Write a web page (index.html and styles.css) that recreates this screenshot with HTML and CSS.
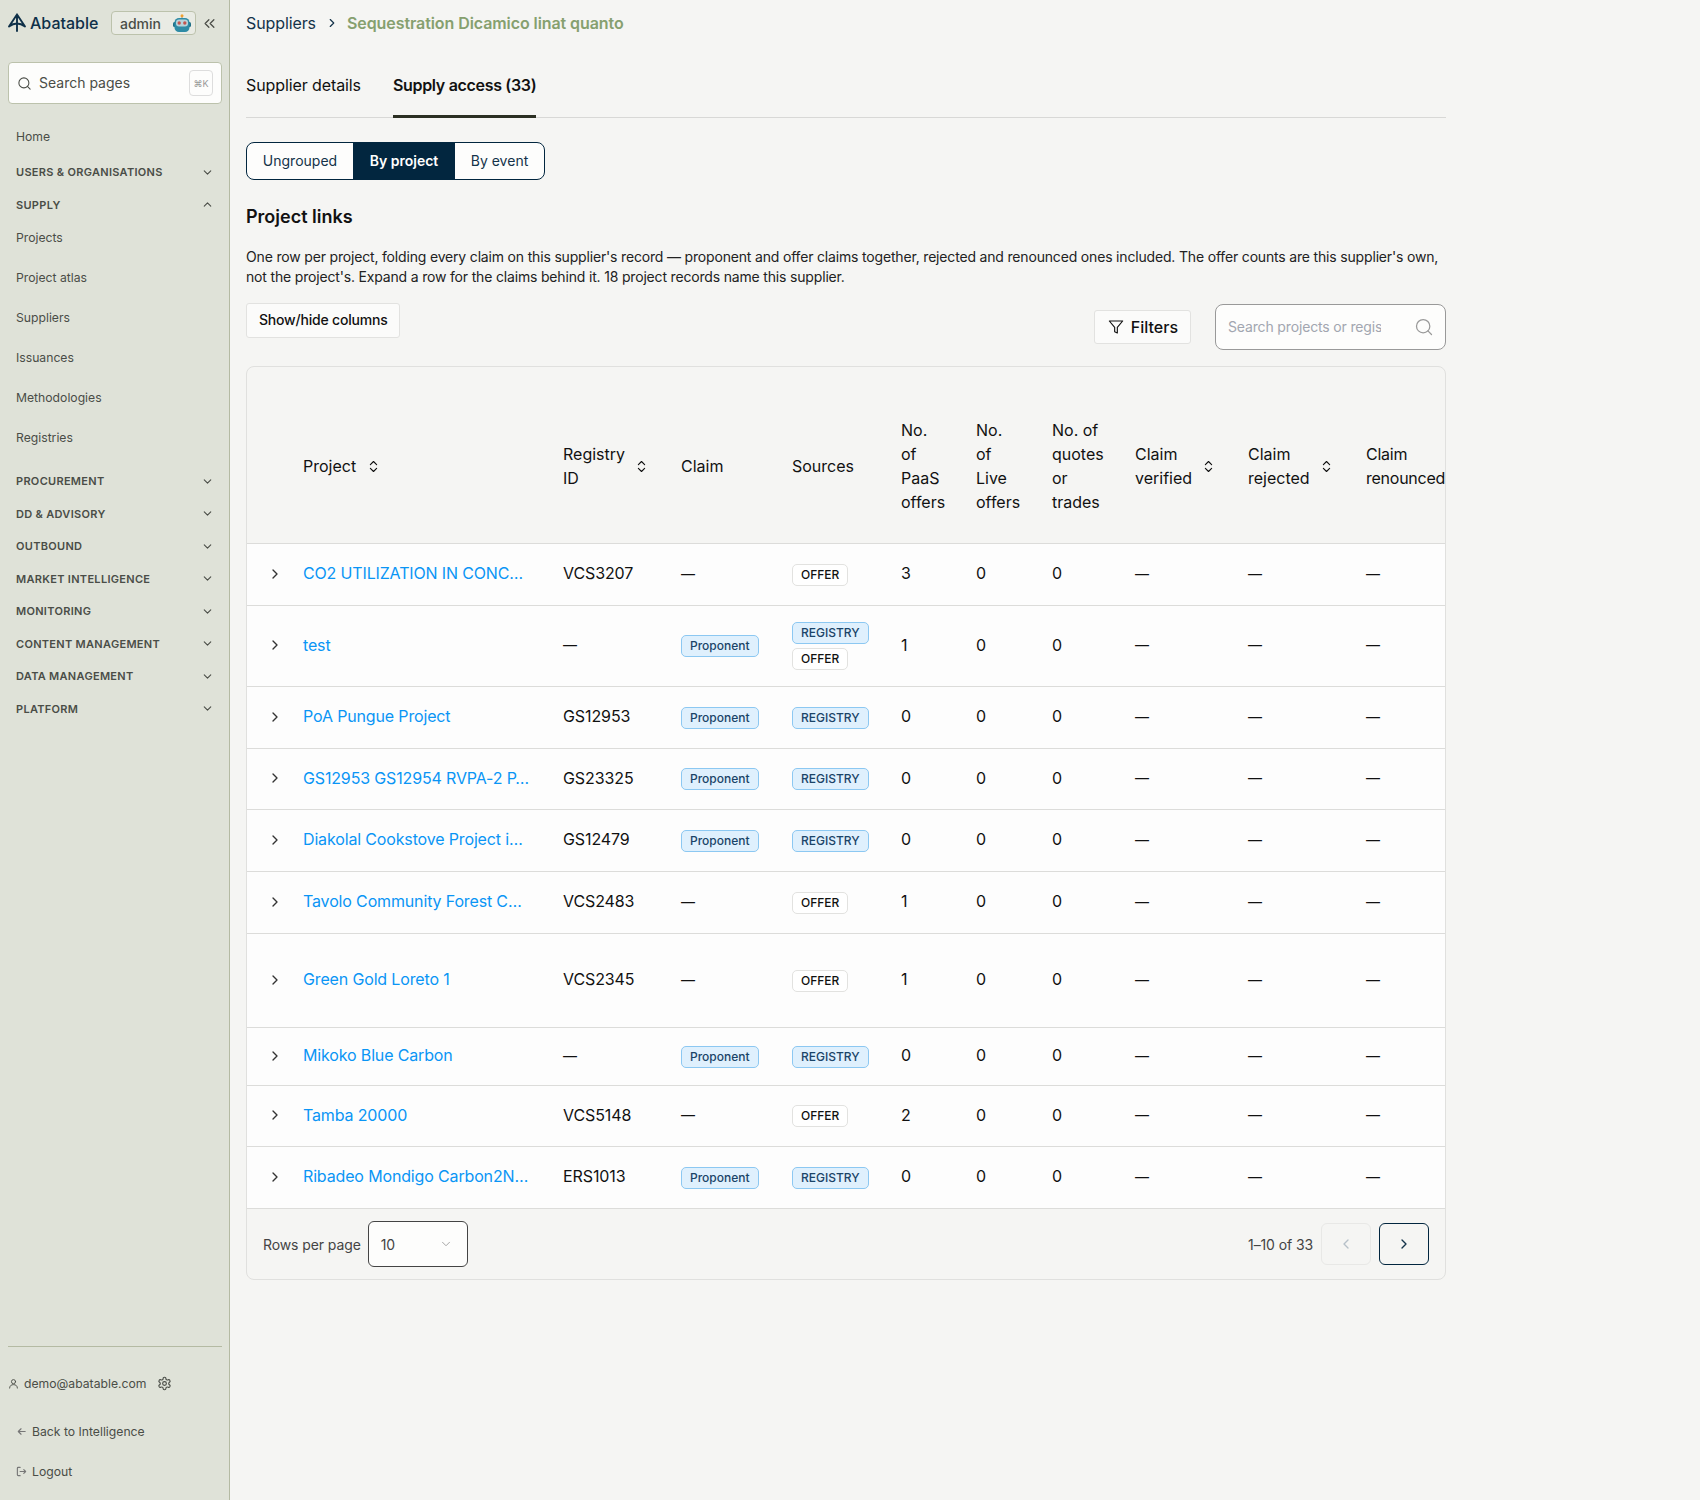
FILE: index.html
```html
<!DOCTYPE html>
<html>
<head>
  <meta charset="UTF-8">
  <title>Supply access</title>
  <link rel="stylesheet" href="styles.css">
</head>
<body>

<svg class="sprite" width="0" height="0">
  <symbol id="i-down" viewBox="0 0 24 24"><path d="M6 9l6 6 6-6"/></symbol>
  <symbol id="i-up" viewBox="0 0 24 24"><path d="M6 15l6-6 6 6"/></symbol>
  <symbol id="i-right" viewBox="0 0 24 24"><path d="M9 6l6 6-6 6"/></symbol>
  <symbol id="i-left" viewBox="0 0 24 24"><path d="M15 6l-6 6 6 6"/></symbol>
  <symbol id="i-sort" viewBox="0 0 24 24"><path d="M7 9l5-5 5 5M7 15l5 5 5-5"/></symbol>
  <symbol id="i-search" viewBox="0 0 24 24"><circle cx="11" cy="11" r="8"/><path d="M21 21l-4.3-4.3"/></symbol>
</svg>

<div class="app">

  <aside class="sidebar">
    <div class="brand">
      <svg class="brand__logo" viewBox="0 0 20 20"><path d="M10 1.500L2 13.500Q6 10.500 10 10.500Q14 10.500 18 13.500L10 1.500M10 1.500V18"/></svg>
      <span class="brand__name">Abatable</span>
      <span class="env-badge">admin
        <svg class="env-badge__bot" viewBox="0 0 18 18">
          <path d="M9 4V2" stroke="#8a8f96" stroke-width="1"/>
          <circle cx="9" cy="1.800" r="1.500" fill="#f0a030"/>
          <rect x="0" y="8" width="18" height="5" rx="1.500" fill="#1f6f86"/>
          <rect x="1.500" y="4" width="15" height="14" rx="4.500" fill="#2e8ba5"/>
          <rect x="3" y="5.500" width="12" height="7" rx="3" fill="#b7d3da"/>
          <circle cx="6.200" cy="9" r="1.700" fill="#c2554f"/>
          <circle cx="11.800" cy="9" r="1.700" fill="#c2554f"/>
        </svg>
      </span>
      <svg class="collapse" viewBox="0 0 24 24"><path d="M11 6l-6 6 6 6M19 6l-6 6 6 6"/></svg>
    </div>

    <div class="page-search">
      <svg class="icon page-search__icon"><use href="#i-search"/></svg>
      <span class="page-search__text">Search pages</span>
      <span class="kbd">⌘K</span>
    </div>

    <nav class="nav">
      <a class="nav__link nav__link--home">Home</a>
      <div class="nav__group nav__group--first">USERS &amp; ORGANISATIONS <svg class="icon nav__chev"><use href="#i-down"/></svg></div>
      <div class="nav__group">SUPPLY <svg class="icon nav__chev"><use href="#i-up"/></svg></div>
      <a class="nav__link">Projects</a>
      <a class="nav__link">Project atlas</a>
      <a class="nav__link">Suppliers</a>
      <a class="nav__link">Issuances</a>
      <a class="nav__link">Methodologies</a>
      <a class="nav__link nav__link--last">Registries</a>
      <div class="nav__group">PROCUREMENT <svg class="icon nav__chev"><use href="#i-down"/></svg></div>
      <div class="nav__group">DD &amp; ADVISORY <svg class="icon nav__chev"><use href="#i-down"/></svg></div>
      <div class="nav__group">OUTBOUND <svg class="icon nav__chev"><use href="#i-down"/></svg></div>
      <div class="nav__group">MARKET INTELLIGENCE <svg class="icon nav__chev"><use href="#i-down"/></svg></div>
      <div class="nav__group">MONITORING <svg class="icon nav__chev"><use href="#i-down"/></svg></div>
      <div class="nav__group">CONTENT MANAGEMENT <svg class="icon nav__chev"><use href="#i-down"/></svg></div>
      <div class="nav__group">DATA MANAGEMENT <svg class="icon nav__chev"><use href="#i-down"/></svg></div>
      <div class="nav__group">PLATFORM <svg class="icon nav__chev"><use href="#i-down"/></svg></div>
    </nav>

    <div class="side-foot">
      <div class="account">
        <svg class="icon account__user" viewBox="0 0 24 24"><circle cx="12" cy="8" r="4.500"/><path d="M3.500 22c0-5 3.500-7.500 8.500-7.500s8.500 2.500 8.500 7.500"/></svg>
        <span>demo@abatable.com</span>
        <svg class="icon account__gear" viewBox="0 0 24 24"><circle cx="12" cy="12" r="3"/><path d="M12.200 2h-.4a2 2 0 0 0-2 2v.2a2 2 0 0 1-1 1.700l-.4.3a2 2 0 0 1-2 0l-.2-.1a2 2 0 0 0-2.700.700l-.2.400a2 2 0 0 0 .7 2.700l.2.100a2 2 0 0 1 1 1.700v.6a2 2 0 0 1-1 1.700l-.2.100a2 2 0 0 0-.7 2.700l.2.400a2 2 0 0 0 2.700.7l.2-.1a2 2 0 0 1 2 0l.4.300a2 2 0 0 1 1 1.700v.2a2 2 0 0 0 2 2h.4a2 2 0 0 0 2-2v-.2a2 2 0 0 1 1-1.700l.4-.3a2 2 0 0 1 2 0l.2.100a2 2 0 0 0 2.700-.7l.2-.4a2 2 0 0 0-.7-2.700l-.2-.1a2 2 0 0 1-1-1.700v-.6a2 2 0 0 1 1-1.700l.2-.1a2 2 0 0 0 .7-2.700l-.2-.4a2 2 0 0 0-2.700-.7l-.2.100a2 2 0 0 1-2 0l-.4-.3a2 2 0 0 1-1-1.700V4a2 2 0 0 0-2-2z"/></svg>
      </div>
      <a class="foot-link foot-link--back">
        <svg class="icon foot-link__icon" viewBox="0 0 24 24"><path d="M20 12H5M11 6l-6 6 6 6"/></svg>
        Back to Intelligence
      </a>
      <a class="foot-link">
        <svg class="icon foot-link__icon" viewBox="0 0 24 24"><path d="M9 3H5a2 2 0 0 0-2 2v14a2 2 0 0 0 2 2h4M9 12h12M17 8l4 4-4 4"/></svg>
        Logout
      </a>
    </div>
  </aside>

  <main class="main">
    <div class="crumbs">
      <a class="crumbs__link">Suppliers</a>
      <svg class="icon crumbs__sep"><use href="#i-right"/></svg>
      <span class="crumbs__current">Sequestration Dicamico linat quanto</span>
    </div>

    <div class="tabs">
      <a class="tabs__item">Supplier details</a>
      <a class="tabs__item tabs__item--active">Supply access (33)</a>
    </div>

    <div class="segmented">
      <a class="segmented__item segmented__item--a">Ungrouped</a>
      <a class="segmented__item segmented__item--b segmented__item--active">By project</a>
      <a class="segmented__item segmented__item--c">By event</a>
    </div>

    <h2 class="section-title">Project links</h2>
    <p class="section-text">One row per project, folding every claim on this supplier's record — proponent and offer claims together, rejected and renounced ones included. The offer counts are this supplier's own, not the project's. Expand a row for the claims behind it. 18 project records name this supplier.</p>

    <div class="toolbar">
      <button class="btn">Show/hide columns</button>
      <div class="toolbar__right">
        <button class="btn btn--filter">
          <svg class="icon btn__icon" viewBox="0 0 24 24"><path d="M22 3H2l8 9.500V19l4 2v-8.500L22 3z"/></svg>
          Filters
        </button>
        <div class="table-search">
          <span class="table-search__text">Search projects or regis</span>
          <svg class="icon table-search__icon"><use href="#i-search"/></svg>
        </div>
      </div>
    </div>

    <div class="table-card">
      <div class="table-scroll">
        <table class="table">
          <colgroup>
            <col class="col-expand"><col class="col-project"><col class="col-registry"><col class="col-claim"><col class="col-sources"><col class="col-paas"><col class="col-live"><col class="col-quotes"><col class="col-verified"><col class="col-rejected"><col class="col-renounced">
          </colgroup>
          <thead>
            <tr>
              <th></th>
              <th><span class="th-sort">Project <svg class="icon sort sort--gap"><use href="#i-sort"/></svg></span></th>
              <th><span class="th-sort"><span>Registry<br>ID</span> <svg class="icon sort"><use href="#i-sort"/></svg></span></th>
              <th>Claim</th>
              <th>Sources</th>
              <th>No.<br>of<br>PaaS<br>offers</th>
              <th>No.<br>of<br>Live<br>offers</th>
              <th>No. of<br>quotes<br>or<br>trades</th>
              <th><span class="th-sort"><span>Claim<br>verified</span> <svg class="icon sort"><use href="#i-sort"/></svg></span></th>
              <th><span class="th-sort"><span>Claim<br>rejected</span> <svg class="icon sort"><use href="#i-sort"/></svg></span></th>
              <th class="th-last">Claim<br>renounced</th>
            </tr>
          </thead>
          <tbody>
            <tr class="row">
              <td class="expand"><svg class="icon"><use href="#i-right"/></svg></td>
              <td><a class="link">CO2 UTILIZATION IN CONC…</a></td><td>VCS3207</td><td class="dash">—</td>
              <td class="tags"><span class="tag tag--offer">OFFER</span></td>
              <td>3</td><td>0</td><td>0</td><td class="dash">—</td><td class="dash">—</td><td class="dash">—</td>
            </tr>
            <tr class="row row--double">
              <td class="expand"><svg class="icon"><use href="#i-right"/></svg></td>
              <td><a class="link">test</a></td><td class="dash">—</td>
              <td class="tags"><span class="tag tag--blue">Proponent</span></td>
              <td class="tags"><div class="tag-stack"><span class="tag tag--blue">REGISTRY</span><span class="tag tag--offer">OFFER</span></div></td>
              <td>1</td><td>0</td><td>0</td><td class="dash">—</td><td class="dash">—</td><td class="dash">—</td>
            </tr>
            <tr class="row">
              <td class="expand"><svg class="icon"><use href="#i-right"/></svg></td>
              <td><a class="link">PoA Pungue Project</a></td><td>GS12953</td>
              <td class="tags"><span class="tag tag--blue">Proponent</span></td>
              <td class="tags"><span class="tag tag--blue">REGISTRY</span></td>
              <td>0</td><td>0</td><td>0</td><td class="dash">—</td><td class="dash">—</td><td class="dash">—</td>
            </tr>
            <tr class="row row--snug">
              <td class="expand"><svg class="icon"><use href="#i-right"/></svg></td>
              <td><a class="link">GS12953 GS12954 RVPA-2 P…</a></td><td>GS23325</td>
              <td class="tags"><span class="tag tag--blue">Proponent</span></td>
              <td class="tags"><span class="tag tag--blue">REGISTRY</span></td>
              <td>0</td><td>0</td><td>0</td><td class="dash">—</td><td class="dash">—</td><td class="dash">—</td>
            </tr>
            <tr class="row">
              <td class="expand"><svg class="icon"><use href="#i-right"/></svg></td>
              <td><a class="link">Diakolal Cookstove Project i…</a></td><td>GS12479</td>
              <td class="tags"><span class="tag tag--blue">Proponent</span></td>
              <td class="tags"><span class="tag tag--blue">REGISTRY</span></td>
              <td>0</td><td>0</td><td>0</td><td class="dash">—</td><td class="dash">—</td><td class="dash">—</td>
            </tr>
            <tr class="row">
              <td class="expand"><svg class="icon"><use href="#i-right"/></svg></td>
              <td><a class="link">Tavolo Community Forest C…</a></td><td>VCS2483</td><td class="dash">—</td>
              <td class="tags"><span class="tag tag--offer">OFFER</span></td>
              <td>1</td><td>0</td><td>0</td><td class="dash">—</td><td class="dash">—</td><td class="dash">—</td>
            </tr>
            <tr class="row row--tall">
              <td class="expand"><svg class="icon"><use href="#i-right"/></svg></td>
              <td><a class="link">Green Gold Loreto 1</a></td><td>VCS2345</td><td class="dash">—</td>
              <td class="tags"><span class="tag tag--offer">OFFER</span></td>
              <td>1</td><td>0</td><td>0</td><td class="dash">—</td><td class="dash">—</td><td class="dash">—</td>
            </tr>
            <tr class="row row--short">
              <td class="expand"><svg class="icon"><use href="#i-right"/></svg></td>
              <td><a class="link">Mikoko Blue Carbon</a></td><td class="dash">—</td>
              <td class="tags"><span class="tag tag--blue">Proponent</span></td>
              <td class="tags"><span class="tag tag--blue">REGISTRY</span></td>
              <td>0</td><td>0</td><td>0</td><td class="dash">—</td><td class="dash">—</td><td class="dash">—</td>
            </tr>
            <tr class="row row--snug">
              <td class="expand"><svg class="icon"><use href="#i-right"/></svg></td>
              <td><a class="link">Tamba 20000</a></td><td>VCS5148</td><td class="dash">—</td>
              <td class="tags"><span class="tag tag--offer">OFFER</span></td>
              <td>2</td><td>0</td><td>0</td><td class="dash">—</td><td class="dash">—</td><td class="dash">—</td>
            </tr>
            <tr class="row">
              <td class="expand"><svg class="icon"><use href="#i-right"/></svg></td>
              <td><a class="link">Ribadeo Mondigo Carbon2N…</a></td><td>ERS1013</td>
              <td class="tags"><span class="tag tag--blue">Proponent</span></td>
              <td class="tags"><span class="tag tag--blue">REGISTRY</span></td>
              <td>0</td><td>0</td><td>0</td><td class="dash">—</td><td class="dash">—</td><td class="dash">—</td>
            </tr>
          </tbody>
        </table>
      </div>

      <div class="pager">
        <span class="pager__label">Rows per page</span>
        <div class="select">10 <svg class="icon select__chev"><use href="#i-down"/></svg></div>
        <span class="pager__count">1–10 of 33</span>
        <button class="page-btn page-btn--off"><svg class="icon"><use href="#i-left"/></svg></button>
        <button class="page-btn"><svg class="icon"><use href="#i-right"/></svg></button>
      </div>
    </div>
  </main>

</div>

</body>
</html>
```

FILE: styles.css
```css
html,
body {
  -webkit-font-smoothing: antialiased;
}

body {
  margin: 0;
  font-family: Inter, "Liberation Sans", sans-serif;
  font-size: 16px;
  color: #111;
  background-color: #f5f5f3;
}

.sprite { position: absolute; }

.icon {
  width: 16px;
  height: 16px;
  fill: none;
  stroke: currentColor;
  stroke-width: 2;
  stroke-linecap: round;
  stroke-linejoin: round;
  flex: none;
}

.app {
  display: flex;
  min-height: 100vh;
}


/* Sidebar */

.sidebar {
  display: flex;
  flex-direction: column;
  flex: none;
  box-sizing: border-box;
  width: 230px;
  height: 1500px;
  padding: 11px 7px 20px 8px;
  background-color: #dfe2d8;
  border-right: 1px solid #b4baa3;
  color: #4a4d47;
}

.brand {
  display: flex;
  align-items: center;
  height: 24px;
}

.brand__logo {
  flex: none;
  width: 20px;
  height: 20px;
  margin: 0 3px 0 -1px;
  fill: none;
  stroke: #0e3048;
  stroke-width: 1.900;
  stroke-linejoin: round;
  stroke-linecap: round;
}

.brand__name {
  width: 81px;
  font-size: 16px;
  font-weight: 500;
  color: #0e3048;
}

.env-badge {
  display: flex;
  align-items: center;
  justify-content: space-between;
  box-sizing: border-box;
  width: 85px;
  height: 24px;
  padding: 0 4px 0 8px;
  font-size: 14px;
  font-weight: 500;
  border: 1px solid #bcc2ac;
  border-radius: 4px;
  background-color: #e9ebe4;
}

.env-badge__bot {
  width: 18px;
  height: 18px;
  margin-top: -1px;
}

.collapse {
  width: 15px;
  height: 15px;
  margin-left: 6px;
  fill: none;
  stroke: #4a4d47;
  stroke-width: 2;
  stroke-linecap: round;
  stroke-linejoin: round;
}

.page-search {
  display: flex;
  align-items: center;
  box-sizing: border-box;
  height: 42px;
  margin-top: 27px;
  padding: 0 8px 0 8px;
  background-color: #fdfdfc;
  border: 1px solid #bcc2ac;
  border-radius: 4px;
}

.page-search__icon {
  width: 15px;
  height: 15px;
  margin-right: 7px;
  stroke-width: 1.700;
}

.page-search__text {
  flex: 1;
  padding-bottom: 2px;
  font-size: 14px;
}

.kbd {
  display: flex;
  align-items: center;
  justify-content: center;
  width: 22px;
  height: 24px;
  font-size: 9px;
  color: #999;
  border: 1px solid #ddd;
  border-radius: 4px;
}

.nav {
  display: flex;
  flex-direction: column;
  margin-top: 24px;
}

.nav__link {
  display: flex;
  align-items: center;
  height: 40px;
  padding-left: 8px;
  font-size: 12.200px;
}

.nav__group + .nav__link { margin-top: -4px; }

.nav__link--home { height: 16px; }
.nav__link--last { margin-bottom: 8px; }

.nav__group {
  display: flex;
  align-items: center;
  justify-content: space-between;
  height: 32.500px;
  padding: 0 8px;
  font-size: 11px;
  font-weight: 600;
  letter-spacing: .3px;
}

.nav__group--first { margin-top: 12px; }

.nav__chev {
  width: 13px;
  height: 13px;
}

.side-foot {
  margin-top: auto;
  padding-top: 27px;
  border-top: 1px solid #b4baa3;
  font-size: 12.200px;
}

.account {
  display: flex;
  align-items: center;
  height: 18px;
}

.account__user {
  width: 11px;
  height: 11px;
  margin-right: 5px;
  stroke-width: 2;
}

.account__gear {
  width: 15px;
  height: 15px;
  margin-left: 11px;
  stroke-width: 1.800;
}

.foot-link {
  display: flex;
  align-items: center;
  height: 18px;
  margin-top: 22px;
  padding-left: 8px;
}

.foot-link--back { margin-top: 30px; }

.foot-link__icon {
  width: 11px;
  height: 11px;
  margin-right: 5px;
  color: #777;
  stroke-width: 2.500;
}


/* Main column */

.main {
  box-sizing: border-box;
  width: 1216px;
  padding: 13px 0 0 16px;
}

.crumbs {
  display: flex;
  align-items: center;
  height: 20px;
  font-size: 16px;
}

.crumbs__link {
  color: #14334a;
  letter-spacing: -.1px;
}

.crumbs__sep {
  width: 14px;
  height: 14px;
  margin: 0 8px 0 9px;
  color: #14334a;
}

.crumbs__current {
  font-weight: 600;
  letter-spacing: -.08px;
  color: #86a06f;
}

.tabs {
  display: flex;
  gap: 32px;
  height: 65px;
  margin-top: 20px;
  box-sizing: border-box;
  border-bottom: 1px solid #d8d8d6;
}

.tabs__item {
  height: 65px;
  box-sizing: border-box;
  padding-top: 22px;
  font-size: 16px;
  letter-spacing: -.1px;
}

.tabs__item--active {
  font-weight: 600;
  letter-spacing: -.32px;
  border-bottom: 3px solid #2b2f22;
}

.segmented {
  display: flex;
  box-sizing: border-box;
  width: 299px;
  height: 38px;
  margin-top: 24px;
  border: 1px solid #02263f;
  border-radius: 8px;
  overflow: hidden;
  background-color: #fdfdfc;
}

.segmented__item {
  display: flex;
  align-items: center;
  justify-content: center;
  padding-bottom: 2px;
  font-size: 14px;
  color: #14334a;
}

.segmented__item--a { width: 106px; }
.segmented__item--b { width: 102px; }
.segmented__item--c { flex: 1; }

.segmented__item--active {
  font-weight: 600;
  color: #fff;
  background-color: #02263f;
}

.section-title {
  margin: 25px 0 0;
  font-size: 18px;
  line-height: 24px;
  font-weight: 600;
}

.section-text {
  margin: 18px 0 0;
  font-size: 14px;
  letter-spacing: -.175px;
  line-height: 19.500px;
  color: #222;
}

.toolbar {
  display: flex;
  justify-content: space-between;
  align-items: flex-start;
  margin-top: 17px;
}

.toolbar__right {
  display: flex;
  align-items: center;
  gap: 24px;
  margin-top: 1px;
}

.btn {
  height: 35px;
  padding: 0 11px 2px 12px;
  font: inherit;
  font-size: 14px;
  letter-spacing: -.2px;
  font-weight: 500;
  color: #111;
  background-color: #fbfbfa;
  border: 1px solid #e2e2e0;
  border-radius: 3px;
}

.btn--filter {
  display: flex;
  align-items: center;
  height: 34px;
  font-size: 16px;
  letter-spacing: 0;
  padding: 0 12px 0 13px;
}

.btn__icon {
  margin-right: 7px;
  stroke-width: 1.700;
}

.table-search {
  display: flex;
  align-items: center;
  justify-content: space-between;
  box-sizing: border-box;
  width: 231px;
  height: 46px;
  padding: 0 11px 0 12px;
  background-color: #fdfdfc;
  border: 1px solid #999;
  border-radius: 8px;
}

.table-search__text {
  width: 153px;
  padding-bottom: 2px;
  overflow: hidden;
  white-space: nowrap;
  font-size: 14px;
  letter-spacing: -.15px;
  color: #a2a6b0;
}

.table-search__icon {
  width: 20px;
  height: 20px;
  color: #999;
  stroke-width: 1.500;
}


/* Table */

.table-card {
  margin-top: 16px;
  border: 1px solid #e0e0de;
  border-radius: 8px;
  overflow: hidden;
}

.table-scroll { overflow: hidden; }

.table {
  table-layout: fixed;
  width: 1239px;
  border-collapse: collapse;
  font-size: 16px;
}

.col-expand { width: 40px; }
.col-project { width: 260px; }
.col-registry { width: 118px; }
.col-claim { width: 111px; }
.col-sources { width: 109px; }
.col-paas { width: 75px; }
.col-live { width: 76px; }
.col-quotes { width: 83px; }
.col-verified { width: 113px; }
.col-rejected { width: 118px; }
.col-renounced { width: 136px; }

.table th {
  height: 154px;
  padding: 22px 0 0 16px;
  font-weight: 400;
  line-height: 24px;
  text-align: left;
  border-bottom: 1px solid #dcdcda;
}

.table th.th-last { letter-spacing: -.25px; }

.th-sort {
  display: flex;
  align-items: center;
  justify-content: space-between;
  padding-right: 16px;
}

.sort {
  width: 15px;
  height: 15px;
  stroke-width: 1.800;
}

.sort--gap { margin-right: auto; margin-left: 10px; }

.row { height: 62px; background-color: #fdfdfd; }
.row--double { height: 81px; }
.row--snug { height: 61px; }
.row--tall { height: 94px; }
.row--short { height: 58px; }

.row td {
  padding: 0 0 3px 16px;
  letter-spacing: -.1px;
  border-bottom: 1px solid #dcdcda;
  vertical-align: middle;
}

.row td.tags { padding-bottom: 0; }

.row td.expand {
  padding: 2px 0 0 20px;
  color: #333;
}

.row td.dash {
  font-size: 14px;
  font-weight: 500;
  letter-spacing: 0;
}

.link {
  letter-spacing: -.15px;
  color: #0a95f5;
}

.tag {
  display: inline-block;
  box-sizing: border-box;
  height: 22px;
  padding: 0 8px;
  font-size: 12px;
  font-weight: 500;
  letter-spacing: 0;
  line-height: 20px;
  border-radius: 5px;
  vertical-align: middle;
}

.tag--offer {
  color: #111;
  background-color: #fff;
  border: 1px solid #e2e2e0;
}

.tag--blue {
  color: #1a4468;
  background-color: #dff0fd;
  border: 1px solid #8cc8f2;
}

.tag-stack {
  display: flex;
  flex-direction: column;
  align-items: flex-start;
  gap: 4px;
}


/* Pagination */

.pager {
  display: flex;
  align-items: center;
  height: 70px;
  padding: 0 16px;
  font-size: 14px;
  letter-spacing: -.1px;
  color: #444;
}

.pager__label { margin-right: 7px; }

.select {
  display: flex;
  align-items: center;
  justify-content: space-between;
  box-sizing: border-box;
  width: 100px;
  height: 46px;
  padding: 0 14px 0 12px;
  background-color: #fdfdfc;
  border: 1px solid #444;
  border-radius: 6px;
}

.select__chev {
  width: 14px;
  height: 14px;
  color: #999;
  stroke-width: 1.500;
}

.pager__count { margin-left: auto; }

.page-btn {
  display: flex;
  align-items: center;
  justify-content: center;
  width: 50px;
  height: 42px;
  margin-left: 8px;
  padding: 0;
  color: #14334a;
  background: none;
  border: 1px solid #02263f;
  border-radius: 6px;
}

.page-btn--off {
  margin-left: 8px;
  color: #b6c0c8;
  border-color: #e8e8e6;
}
```
